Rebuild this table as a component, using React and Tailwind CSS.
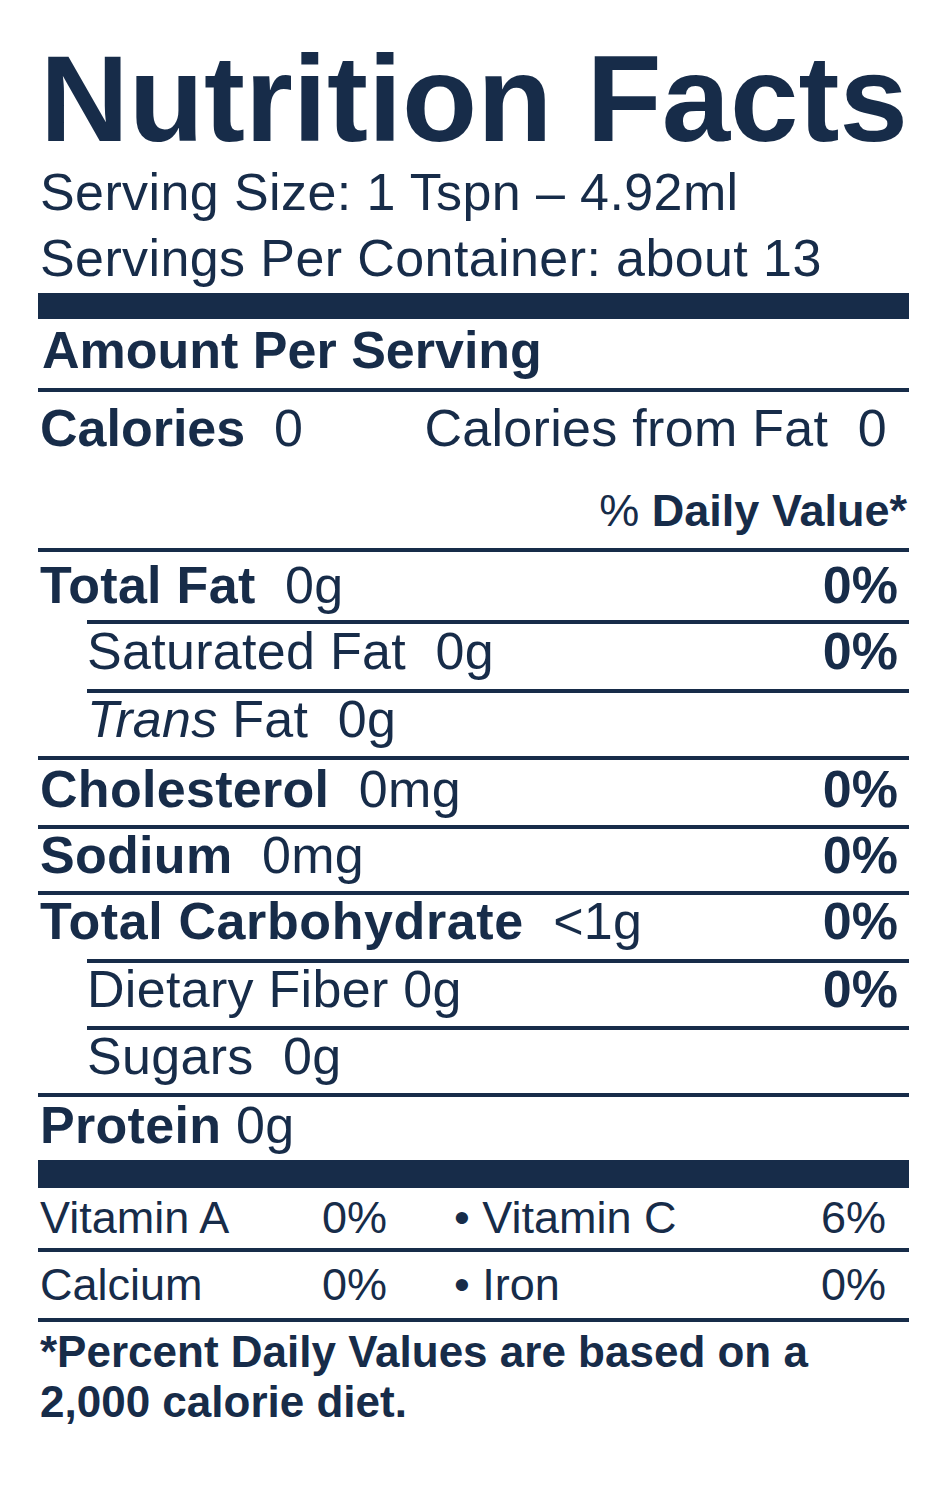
import React from "react";

const row = "flex justify-between border-t-4 border-[#172c49] text-[52px] leading-none tracking-[0.3px]";

function Pct({ children }) {
  return <span className="pr-[11px] font-bold tracking-normal">{children}</span>;
}

export default function App() {
  return (
    <div className="min-h-[1500px] bg-white text-[#172c49] font-['Liberation_Sans',Arial,sans-serif]">
      <div className="ml-[38px] w-[871px] pt-[37px]">
        <h1 className="ml-[2px] text-[123px] font-bold leading-none whitespace-nowrap">Nutrition Facts</h1>
        <div className="-mt-[1px] pl-[2px] text-[52px] leading-[66px] tracking-[0.4px] whitespace-nowrap">
          <div>Serving Size: 1 Tspn – 4.92ml</div>
          <div>Servings Per Container: about 13</div>
        </div>
        <div className="mt-[2px] h-[26px] bg-[#172c49]" />
        <div className="h-[69px] pl-[4px] text-[52px] font-bold leading-[63px]">Amount Per Serving</div>

        <div className="h-[160px] border-t-4 border-[#172c49] pt-[10px]">
          <div className="flex justify-between text-[52px] leading-none">
            <span className="whitespace-pre pl-[2px]">
              <span className="font-bold">Calories</span>  0
            </span>
            <span className="whitespace-pre pr-[22px] tracking-[0.3px]">Calories from Fat  0</span>
          </div>
          <div className="mt-[34px] whitespace-pre pr-[2px] text-right text-[45px] leading-none">
            % <span className="font-bold">Daily Value*</span>
          </div>
        </div>

        <div className={`${row} h-[72px] pt-[7px]`}>
          <span className="whitespace-pre pl-[2px]">
            <span className="font-bold">Total Fat</span>  0g
          </span>
          <Pct>0%</Pct>
        </div>
        <div className={`${row} ml-[49px] h-[69px] pt-[1px]`}>
          <span className="whitespace-pre">Saturated Fat  0g</span>
          <Pct>0%</Pct>
        </div>
        <div className={`${row} ml-[49px] h-[67px] pt-0`}>
          <span className="whitespace-pre">
            <span className="italic">Trans</span> Fat  0g
          </span>
        </div>
        <div className={`${row} h-[69px] pt-[3px]`}>
          <span className="whitespace-pre pl-[2px]">
            <span className="font-bold">Cholesterol</span>  0mg
          </span>
          <Pct>0%</Pct>
        </div>
        <div className={`${row} h-[66px] pt-0`}>
          <span className="whitespace-pre pl-[2px]">
            <span className="font-bold">Sodium</span>  0mg
          </span>
          <Pct>0%</Pct>
        </div>
        <div className={`${row} h-[68px] pt-0`}>
          <span className="whitespace-pre pl-[2px]">
            <span className="font-bold tracking-[0.6px]">Total Carbohydrate</span>  &lt;1g
          </span>
          <Pct>0%</Pct>
        </div>
        <div className={`${row} ml-[49px] h-[67px] pt-0`}>
          <span className="whitespace-pre">Dietary Fiber 0g</span>
          <Pct>0%</Pct>
        </div>
        <div className={`${row} ml-[49px] h-[67px] pt-0`}>
          <span className="whitespace-pre">Sugars  0g</span>
        </div>
        <div className={`${row} h-[67px] pt-[2px]`}>
          <span className="whitespace-pre pl-[2px]">
            <span className="font-bold">Protein</span> 0g
          </span>
        </div>

        <div className="h-[28px] bg-[#172c49]" />
        <div className="flex h-[60px] pt-[7px] text-[45px] leading-none">
          <span className="w-[284px] pl-[2px]">Vitamin A</span>
          <span className="w-[132px]">0%</span>
          <span className="flex-1 whitespace-pre">• Vitamin C</span>
          <span className="pr-[23px]">6%</span>
        </div>
        <div className="flex h-[70px] border-t-4 border-[#172c49] pt-[10px] text-[45px] leading-none">
          <span className="w-[284px] pl-[2px]">Calcium</span>
          <span className="w-[132px]">0%</span>
          <span className="flex-1 whitespace-pre">• Iron</span>
          <span className="pr-[23px]">0%</span>
        </div>
        <p className="border-t-4 border-[#172c49] pt-[5px] pl-[2px] text-[44px] font-bold leading-[50px] whitespace-nowrap">
          *Percent Daily Values are based on a
          <br />
          2,000 calorie diet.
        </p>
      </div>
    </div>
  );
}
